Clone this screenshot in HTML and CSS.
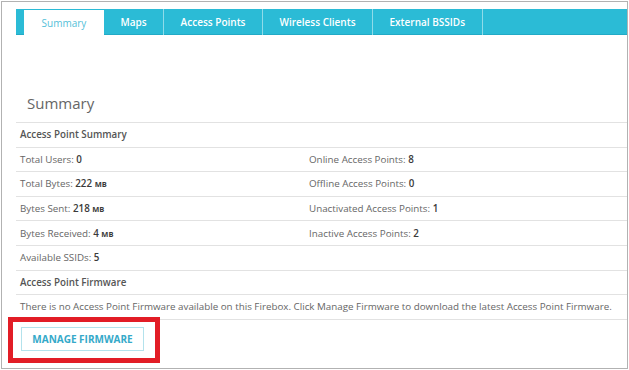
FILE: index.html
```html
<!DOCTYPE html>
<html lang="en">
<head>
    <meta charset="UTF-8">
    <meta name="viewport" content="width=device-width, initial-scale=1.0">
    <title>Access Points Summary</title>
    <link rel="stylesheet" href="styles.css">
</head>
<body>
    <div class="frame">
        <ul class="tabs">
            <li class="tab active">Summary</li>
            <li class="tab">Maps</li>
            <li class="tab">Access Points</li>
            <li class="tab">Wireless Clients</li>
            <li class="tab">External BSSIDs</li>
        </ul>

        <h2 class="title">Summary</h2>

        <div class="summary">
            <div class="row head">Access Point Summary</div>
            <div class="row">
                <div class="cell">Total Users: <b>0</b></div>
                <div class="cell">Online Access Points: <b>8</b></div>
            </div>
            <div class="row">
                <div class="cell">Total Bytes: <b>222 <span class="unit">MB</span></b></div>
                <div class="cell">Offline Access Points: <b>0</b></div>
            </div>
            <div class="row">
                <div class="cell">Bytes Sent: <b>218 <span class="unit">MB</span></b></div>
                <div class="cell">Unactivated Access Points: <b>1</b></div>
            </div>
            <div class="row">
                <div class="cell">Bytes Received: <b>4 <span class="unit">MB</span></b></div>
                <div class="cell">Inactive Access Points: <b>2</b></div>
            </div>
            <div class="row">
                <div class="cell">Available SSIDs: <b>5</b></div>
                <div class="cell"></div>
            </div>
            <div class="row head">Access Point Firmware</div>
            <div class="row">There is no Access Point Firmware available on this Firebox. Click Manage Firmware to download the latest Access Point Firmware.</div>
        </div>

        <div class="actions">
            <button class="btn-outline">MANAGE FIRMWARE</button>
            <div class="highlight"></div>
        </div>
    </div>
</body>
</html>
```

FILE: styles.css
```css
body {
    margin: 0;
    font-family: "Open Sans", "Liberation Sans", sans-serif;
    color: #5a5a5a;
    background-color: #fff;
}
.frame {
    margin: 1px;
    border: 1px solid #b2b2b2;
    padding: 7px 0 0 14px;
    box-sizing: border-box;
    height: 368px;
}
.tabs {
    display: flex;
    list-style: none;
    margin: 0;
    padding: 0 0 0 8px;
    height: 26px;
    background-color: #2bbbd6;
    border-bottom: 1px solid #22aac6;
    box-sizing: border-box;
}
.tab {
    padding: 0 16.5px;
    height: 26px;
    line-height: 26px;
    font-size: 10px;
    font-weight: 600;
    color: #fff;
    border-right: 1px solid #8fdbe9;
    box-sizing: border-box;
}
.tab.active {
    margin-top: 1px;
    width: 80px;
    text-align: center;
    background-color: #fff;
    color: #55bfd9;
    font-weight: 400;
    border-right: none;
}
.title {
    margin: 58px 0 0 11px;
    padding-bottom: 9px;
    font-size: 15px;
    line-height: 20px;
    font-weight: 400;
    color: #666;
}
.summary {
    border-top: 1px solid #e2e2e2;
    font-size: 9.8px;
}
.row {
    display: grid;
    grid-template-columns: 289px 1fr;
    align-items: center;
    height: 24.6px;
    padding-left: 4px;
    border-bottom: 1px solid #e2e2e2;
    box-sizing: border-box;
    color: #666;
    white-space: nowrap;
}
.row.head {
    display: flex;
    font-weight: 600;
    color: #555;
}
.row:last-child {
    display: flex;
}
.row b {
    color: #3a3a3a;
    font-weight: 600;
}
.unit {
    font-size: 7.5px;
    font-weight: 700;
}
.actions {
    position: relative;
    padding: 6px 0 0 5px;
}
.btn-outline {
    width: 123px;
    height: 24px;
    padding: 0;
    border: 1px solid #b3e2ec;
    background-color: #fff;
    color: #35a9c9;
    font-family: "Open Sans", "Liberation Sans", sans-serif;
    font-size: 10px;
    font-weight: 700;
}
.highlight {
    position: absolute;
    left: -8px;
    top: -3px;
    width: 152px;
    height: 46px;
    border: 5px solid #e21d26;
    box-sizing: border-box;
}
```
